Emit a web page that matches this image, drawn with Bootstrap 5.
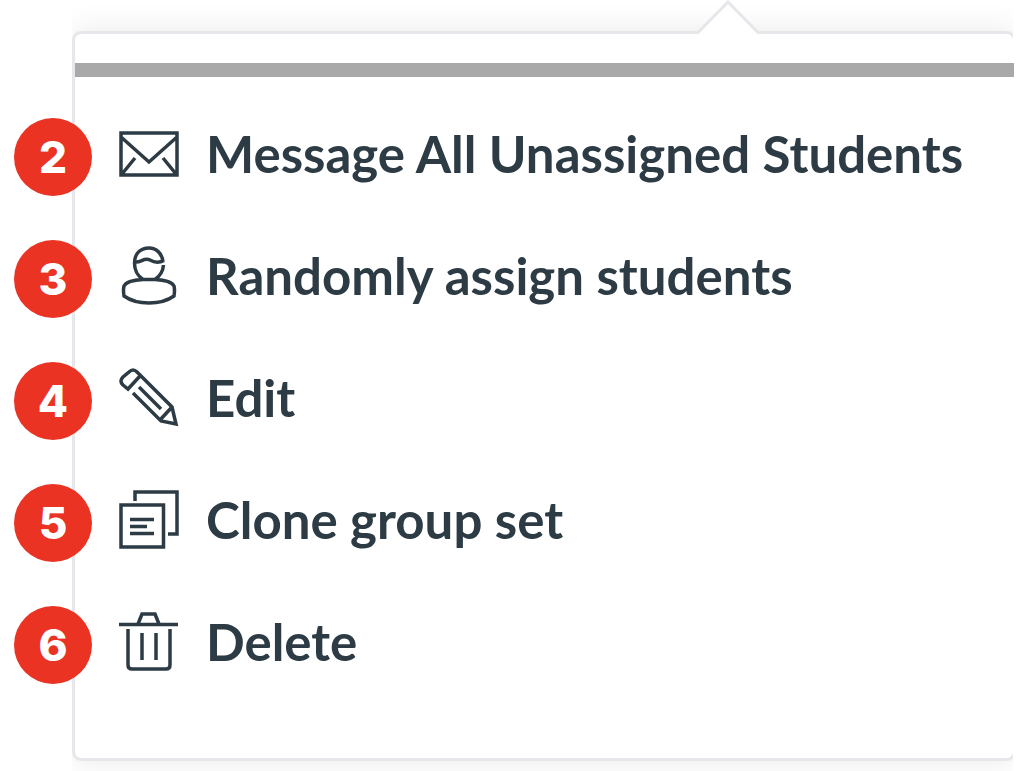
<!DOCTYPE html>
<html lang="en">
<head>
<meta charset="utf-8">
<meta name="viewport" content="width=device-width, initial-scale=1">
<title>Group set options</title>
<link href="https://cdn.jsdelivr.net/npm/bootstrap@5.3.0/dist/css/bootstrap.min.css" rel="stylesheet">
<style>
  body { background: #fff; color: #2d3b45; font-family: Lato, sans-serif; overflow-x: hidden; }
  .stage { padding: 31px 10px 10px 72px; overflow: hidden; }
  .menu-panel { padding: 32px 0 56px 3px; }
  /* frame with a soft shadow above and below only */
  .menu-panel::before {
    content: ""; position: absolute; inset: 0 -2px 0 0; z-index: 0;
    border: 3px solid #e5e7ea; border-radius: 9px; background: #fff;
    box-shadow: 0 0 32px rgba(0, 0, 0, .09);
    clip-path: inset(-31px 3px -12px 0);
  }
  .menu-arrow { position: absolute; top: -31px; right: 254px; z-index: 1; }
  .menu-rule { height: 14px; background: #a9a9a9; z-index: 1; }
  .menu-items { padding-top: 18px; z-index: 1; }
  .menu-item { height: 122px; padding: 0 0 4px 44px; }
  .menu-link { gap: 27px; color: #2d3b45; font-size: 51px; font-weight: 700; line-height: 64px; white-space: nowrap; }
  .menu-link svg { width: 60px; height: 60px; fill: none; stroke: #2d3b45; stroke-width: 3.5; }
  .step {
    position: absolute; left: -61px; top: 23px; width: 78px; height: 78px;
    background: #ea3323; color: #fff; font: 800 44px/78px Inter, sans-serif;
  }
</style>
</head>
<body>
<main class="stage">
  <nav class="menu-panel position-relative" aria-label="Group set options">
    <svg class="menu-arrow" width="64" height="35" viewBox="0 0 64 35" aria-hidden="true">
      <path d="M0 35V32H2L32 2L62 32H64V35Z" fill="#fff"/>
      <path d="M0 32.5H2L32 2L62 32.5H64" fill="none" stroke="#e5e7ea" stroke-width="3"/>
    </svg>
    <div class="menu-rule position-relative"></div>
    <ul class="menu-items list-unstyled position-relative mb-0">
      <li class="menu-item position-relative d-flex align-items-center">
        <span class="step rounded-circle text-center">2</span>
        <a class="menu-link d-flex align-items-center text-decoration-none" href="#message">
          <svg viewBox="0 0 60 60" aria-hidden="true"><path d="M2 9H58V51H2ZM2 13L30 38L58 13M3 50L16 34M57 50L44 34"/></svg>
          <span>Message All Unassigned Students</span>
        </a>
      </li>
      <li class="menu-item position-relative d-flex align-items-center">
        <span class="step rounded-circle text-center">3</span>
        <a class="menu-link d-flex align-items-center text-decoration-none" href="#assign">
          <svg viewBox="0 0 60 60" aria-hidden="true"><path d="M44 16C43 7 37 2 30 2C21 2 15.500 8 15.500 17C15.500 26 19 30 24 33.500H36C41 30 44 26 44.500 19M16 16C22 17 25 11 31 14C36 17 40 17 45 14.500M24 33.500C14 34 7 36 5 40Q4 44 5 50C12 55 21 57 30 57S48 55 55 50Q56 44 55 40C53 36 46 34 36 33.500"/></svg>
          <span>Randomly assign students</span>
        </a>
      </li>
      <li class="menu-item position-relative d-flex align-items-center">
        <span class="step rounded-circle text-center">4</span>
        <a class="menu-link d-flex align-items-center text-decoration-none" href="#edit">
          <svg viewBox="0 0 60 60" aria-hidden="true"><path d="M14 25L42 53L57 56L53 39L18 4Q14 0 10 4L4 9Q0 13 4 17L9 21L21 8M53 39L41 52M20 19L42 41"/></svg>
          <span>Edit</span>
        </a>
      </li>
      <li class="menu-item position-relative d-flex align-items-center">
        <span class="step rounded-circle text-center">5</span>
        <a class="menu-link d-flex align-items-center text-decoration-none" href="#clone">
          <svg viewBox="0 0 60 60" aria-hidden="true"><path d="M2 15H44.500V57H2ZM16 11V2H58V44H49M11 29.500H35M11 36.500H28M11 43.500H35"/></svg>
          <span>Clone group set</span>
        </a>
      </li>
      <li class="menu-item position-relative d-flex align-items-center">
        <span class="step rounded-circle text-center">6</span>
        <a class="menu-link d-flex align-items-center text-decoration-none" href="#delete">
          <svg viewBox="0 0 60 60" aria-hidden="true"><path d="M0 12.500H59M19 12L23 2H36L40 12M9 17V53Q9 57 13 57H47Q51 57 51 53V17M23 21V48M37 21V48"/></svg>
          <span>Delete</span>
        </a>
      </li>
    </ul>
  </nav>
</main>
<script src="https://cdn.jsdelivr.net/npm/bootstrap@5.3.0/dist/js/bootstrap.bundle.min.js"></script>
</body>
</html>
